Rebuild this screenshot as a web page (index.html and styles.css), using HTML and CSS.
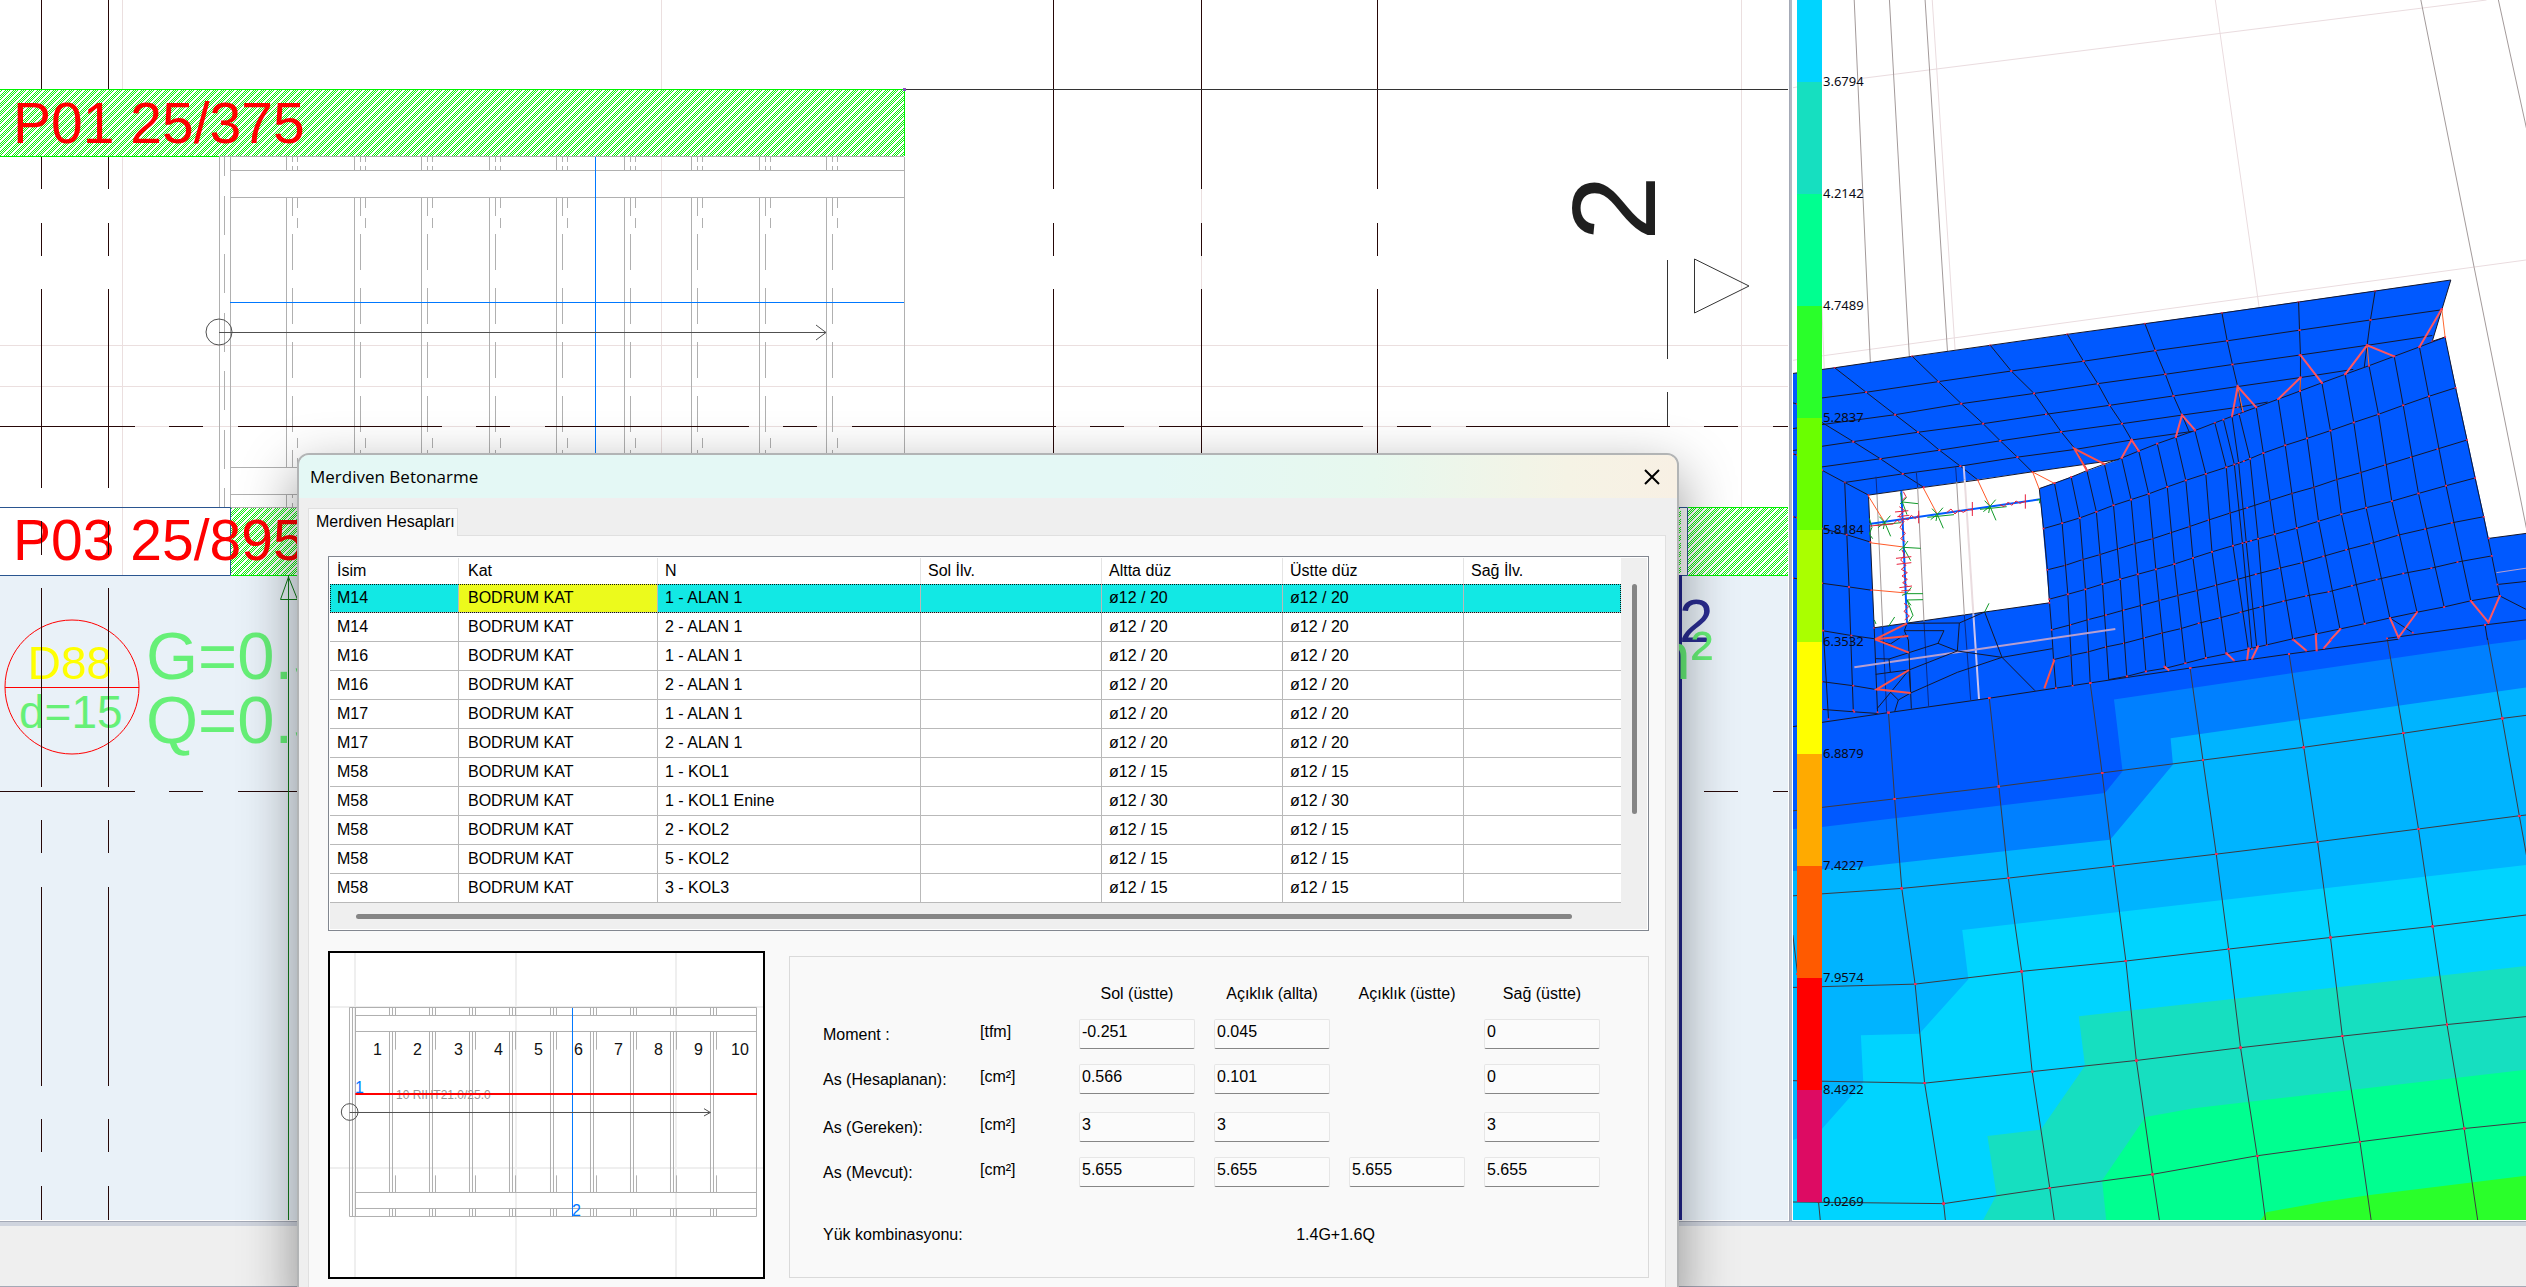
FILE: index.html
```html
<!DOCTYPE html>
<html lang="tr">
<head>
<meta charset="utf-8">
<meta name="viewport" content="width=device-width, initial-scale=1">
<title>Merdiven Betonarme</title>
<link rel="stylesheet" href="styles.css">
</head>
<body>
<main class="workspace">
  <section class="pane pane-plan" aria-label="Kalıp planı">
    <svg class="canvas" aria-hidden="true">
      <defs>
        <pattern id="hatch" width="8" height="8" patternUnits="userSpaceOnUse">
          <path class="hatch-line" d="M-1 1L1 -1M-1 9L9 -1M7 9L9 7M-1 3L3 -1M1 9L9 1M-1 5L5 -1M3 9L9 3"/>
        </pattern>
        <g id="tread">
          <path d="M0 157V170M0 197V467M0 494V507"/>
          <path d="M6 157V162M6 166V170M6 198V216M6 234V270M6 288V324M6 342V378M6 396V432M6 450V467M6 494V498M6 503V507"/>
          <path d="M11 157V162M11 166V170M11 198V208M11 218V228M11 438V448M11 458V467M11 494V498M11 503V507"/>
        </g>
      </defs>
      <rect class="slab" x="0" y="575" width="100%" height="100%"/>
      <g class="grid-line">
        <path d="M122.5 0V507M661.500 0V507M1201.500 0V507M1741.500 0V507"/>
        <path d="M0 345.500H1789M0 386.500H1789M0 426.500H1789"/>
      </g>
      <path class="axis" stroke-dasharray="199 34 33 33" d="M41.500 -10V507M108.500 -10V507M1053.500 -10V507M1201.500 -10V507M1377.500 -10V507"/>
      <g class="stair">
        <path d="M219.500 157V507M230.500 157V507M904.500 157V507M219 156.500H904M230 170.500H904M230 197.500H904M230 467.500H904M230 494.500H904M219 507.500H904"/>
        <path stroke-dasharray="39 20 39 19" d="M224.500 137V507"/>
        <use href="#tread" x="286.500"/><use href="#tread" x="354.500"/><use href="#tread" x="421.500"/>
        <use href="#tread" x="489.500"/><use href="#tread" x="556.500"/><use href="#tread" x="624.500"/>
        <use href="#tread" x="691.500"/><use href="#tread" x="759.500"/><use href="#tread" x="826.500"/>
      </g>
      <rect fill="#fff" x="0" y="90" width="904" height="66"/>
      <rect fill="url(#hatch)" x="0" y="90" width="904" height="66"/>
      <path class="green-edge" d="M0 89.500H904.500V156M0 156.500H219"/>
      <rect fill="#fff" x="0" y="508" width="1788" height="67"/>
      <path class="grid-line" d="M122.500 508V575"/>
      <rect fill="url(#hatch)" x="231" y="508" width="1450" height="67"/>
      <rect fill="url(#hatch)" x="1688" y="508" width="101" height="67"/>
      <path class="green-edge" d="M231 575.500H904M1688 507.500H1789M1688 575.500H1789"/>
      <path class="beam-box" d="M-1 507.500H230.500V575.500H-1M1660 507.500H1687.500V575.500H1660"/>
      <path class="blue" d="M595.500 157V507M230 302.500H904"/>
      <path class="walk" d="M219 332.500H826M816 325L826 332.500L816 340"/>
      <circle class="walk" cx="219" cy="332" r="13"/>
      <text class="beam" x="13" y="143">P01 25/375</text>
      <text class="beam" x="13" y="560">P03 25/895</text>
      <text class="slab-name" x="28" y="679">D88</text>
      <text class="slab-depth" x="19" y="728">d=15</text>
      <text class="load" x="146" y="679">G=0.5</text>
      <text class="load" x="146" y="743">Q=0.5</text>
      <circle class="red" cx="72" cy="687" r="67"/>
      <path class="red" d="M5 687.500H139"/>
      <path class="axis" d="M41.500 521V555M108.500 521V555"/>
      <path class="axis" stroke-dasharray="199 33 33 34" d="M41.500 588V1222M108.500 588V1222"/>
      <path class="axis" stroke-dasharray="204 34 34 35" d="M-69 426.500H1789M-69 791.500H1789"/>
      <path class="edge" d="M905 89.500H1789"/>
      <rect fill="#8a4fc0" x="903" y="88" width="3" height="3"/>
      <path class="edge" d="M1667.500 260V359M1667.500 392V426M1694.500 259V313L1749 286Z"/>
      <text class="axis-name" transform="translate(1655 241) rotate(-90)">2</text>
      <ellipse fill="#555" cx="1087" cy="456" rx="7" ry="2"/>
      <path class="dim" d="M288.500 575V1222M288.500 577L280.500 599.500H297.500Z"/>
      <path class="navy" d="M1680.500 575V1222"/>
      <text class="navy-text" x="1679" y="642">2</text>
      <text class="load" x="1635" y="679">m²</text>
    </svg>
  </section>

  <section class="pane pane-model" aria-label="Analiz sonuçları">
    <svg class="canvas" aria-hidden="true">
      <defs>
        <marker id="node" markerUnits="userSpaceOnUse" markerWidth="6" markerHeight="6" refX="3" refY="3">
          <rect x="1" y="1" width="4" height="4" fill="#f2305a"/>
        </marker>
        <marker id="node2" markerUnits="userSpaceOnUse" markerWidth="6" markerHeight="6" refX="3" refY="3">
          <rect width="6" height="6" fill="#f2305a"/>
        </marker>
        <g id="support">
          <path d="M0 0L18 42M-30 9L50 1M0 0L17 -20M0 0L-16 -17M-20 16L0 0L-4 20"/>
        </g>
      </defs>

      <!-- upper half: axes and wall surfaces -->
      <g transform="translate(-13 0) scale(.47576 .40816)">
        <path stroke="#eadcdf" d="M320 0L368 857M915 0L1007 752M172 192L1485 0M88 872L1568 637M27 215L36 213M88 750L93 905M27 883L36 881"/>
        <path stroke="#a39a9a" d="M156 0L190 890M230 0L272 876M305 0L352 860M1347 0L1459 655L1575 1330M1510 0L1570 320"/>
        <path fill="#0059ff" d="M27 915L1410 686L1371 836L1398 826L1490 1319L1580 1305V1640H27Z"/>
        <path fill="#fff" d="M186 1213L530 1156L712 1126L545 1197L566 1477L198 1538Z"/>
      </g>

      <!-- lower half: stress contours -->
      <g transform="translate(-13 640) scale(.47576 .41262)">
        <path fill="#0059ff" d="M27 0H1600V1410H27Z"/>
        <path fill="#0080ff" d="M27 458L88 453L683 371L720 318L702 144L1480 12L1600 -6V1410H27Z"/>
        <path fill="#00b4ff" d="M27 560L172 550L694 484L826 302L821 238L1600 110V1410H27Z"/>
        <path fill="#00d4ff" d="M27 1212L88 1185L175 1072L170 958L293 954L396 822L383 703L1600 541V1410H27Z"/>
        <path fill="#16dfc0" d="M425 1410L455 1345L436 1202L548 1187L641 1032L628 912L1600 786V1410Z"/>
        <path fill="#00ff90" d="M686 1410L677 1310L768 1156L870 1135L1600 1037V1410Z"/>
        <path fill="#2aff2a" d="M1008 1410L1022 1387L1140 1362L1240 1345L1600 1294V1410Z"/>
      </g>

      <!-- slab mesh -->
      <g transform="translate(-13 640) scale(.47576 .41262)" class="nodes-big" stroke="#3d3a40">
        <path d="M228 176L241 385L256 602L284 834L304 1074L344 1366L348 1410"/>
        <path d="M440 141L460 355L480 577L508 803L530 1046L567 1328L577 1410"/>
        <path d="M652 104L677 322L701 548L727 778L749 1019L783 1295L798 1410"/>
        <path d="M862 68L889 291L917 519L943 749L968 988L1003 1250L1021 1410"/>
        <path d="M1070 34L1101 260L1130 489L1157 721L1182 960L1219 1216L1243 1410"/>
        <path d="M1276 -5L1310 226L1342 458L1372 694L1402 932L1438 1184L1467 1410"/>
        <path d="M1487 -5L1518 190L1554 426L1575 560"/>
        <path d="M27 715L37 810M81 1362L85 1410"/>
        <path d="M27 414L241 385L460 355L677 322L889 291L1101 260L1310 226L1518 190L1600 178"/>
        <path d="M27 620L256 602L480 577L701 548L917 519L1130 489L1342 458L1554 426L1600 420"/>
        <path d="M27 842L284 834L508 803L727 778L943 749L1157 721L1372 694L1600 662"/>
        <path d="M27 1068L304 1074L530 1046L749 1019L968 988L1182 960L1402 932L1600 909"/>
        <path d="M27 1362L344 1366L567 1328L783 1295L1003 1250L1219 1216L1438 1184L1600 1165"/>
        <path stroke="#15182c" d="M27 210L228 176L440 141L652 104L862 68L1070 34L1300 -2"/>
      </g>

      <!-- wall mesh -->
      <g transform="translate(-13 0) scale(.47576 .40816)" class="nodes" stroke="#15182c">
        <path d="M27 915L115 901L278 873L442 846L604 819L767 793L929 767L1090 740L1251 713L1410 686"/>
        <path d="M88 975L181 961L333 935L486 909L638 885L789 859L940 835L1092 809L1241 784L1391 759"/>
        <path d="M27 1050L242 1016L381 989L534 964L668 940L810 917L951 893L1092 870L1234 846L1371 822"/>
        <path d="M27 1104L154 1082L290 1059L427 1038L559 1015L693 993L827 970L962 947L1094 925L1205 905"/>
        <path d="M88 1144L211 1124L335 1103L463 1080L591 1058L719 1038L845 1017L962 998L1025 985"/>
        <path d="M136 1182L258 1161L379 1142L499 1120L621 1101L739 1078L866 1057"/>
        <path d="M186 1213L302 1194L416 1176L530 1156L712 1126"/>
        <path d="M115 901L181 961L242 1016L290 1059L335 1103L379 1142L416 1176"/>
        <path d="M278 873L333 935L381 989L427 1038L463 1080L499 1120L530 1156"/>
        <path d="M442 846L486 909L534 964L591 1058L621 1101L645 1150"/>
        <path d="M604 819L638 885L668 940L693 993L719 1038L739 1078L752 1105"/>
        <path d="M767 793L789 859L810 917L827 970L845 1017L860 1058"/>
        <path d="M929 767L940 835L951 893L962 947L970 1005"/>
        <path d="M1090 740L1092 809L1094 870L1094 925L1094 958"/>
        <path d="M1251 713L1241 784L1234 846L1228 900"/>
        <path d="M1410 686L1391 759L1371 836L1398 826"/>
        <path d="M88 1035L154 1082L211 1124L258 1161L302 1194M88 1152L136 1182L186 1213"/>
        <path d="M27 987L36 990M27 1112L36 1115M27 1266L36 1268M27 1416L36 1418"/>
        <path d="M545 1197L577 1184L612 1169L645 1153L682 1137L718 1122L754 1105L793 1087L832 1071L872 1055L914 1036L950 1020L1001 998L1047 978L1093 958L1139 938L1188 917L1238 896L1291 873L1344 850L1398 826"/>
        <path d="M554 1295L593 1282L630 1269L665 1254L701 1238L738 1224L775 1210L814 1193L853 1177L895 1161L938 1145L975 1130L1016 1110L1062 1091L1108 1074L1157 1055L1206 1035L1258 1015L1310 993L1364 971L1420 950"/>
        <path d="M562 1396L600 1385L636 1371L672 1359L710 1345L745 1332L783 1320L822 1305L861 1290L901 1274L946 1257L982 1244L1030 1226L1076 1209L1122 1194L1170 1175L1220 1158L1272 1139L1326 1120L1382 1100L1444 1078"/>
        <path d="M566 1468L605 1456L642 1444L678 1431L715 1419L752 1407L790 1395L829 1382L868 1367L908 1352L952 1337L990 1325L1040 1309L1086 1294L1132 1277L1180 1260L1232 1244L1286 1228L1342 1209L1400 1190L1461 1171"/>
        <path d="M571 1543L610 1531L648 1518L685 1507L722 1495L760 1483L798 1471L836 1459L876 1447L916 1434L960 1420L1000 1407L1050 1392L1096 1379L1142 1363L1190 1347L1243 1331L1300 1311L1356 1296L1412 1281L1479 1266"/>
        <path d="M575 1616L611 1606L648 1597L685 1585L723 1576L765 1563L803 1551L843 1540L880 1527L924 1514L968 1500L1010 1487L1058 1473L1106 1460L1153 1450L1202 1435L1254 1420L1310 1405L1369 1392L1424 1377L1496 1362"/>
        <path d="M691 1665L729 1657L769 1645L811 1637L852 1625L895 1612L938 1602L985 1590L1023 1580L1078 1565L1128 1553L1177 1541L1229 1528L1282 1514L1339 1500L1396 1487L1452 1472L1513 1460"/>
        <path d="M545 1197L554 1295L562 1396L566 1468L571 1543L575 1616L580 1686M577 1184L593 1282L605 1456L615 1680M612 1169L630 1269L642 1444L652 1673M645 1153L665 1254L678 1431L691 1665"/>
        <path d="M682 1137L701 1238L715 1419L729 1657M718 1122L738 1224L752 1407L769 1645M754 1105L775 1210L790 1395L811 1637M793 1087L814 1193L829 1382L852 1625M832 1071L853 1177L868 1367L895 1612M872 1055L895 1161L908 1352L938 1602"/>
        <path d="M914 1036L938 1145L952 1337L985 1595M932 1028L955 1138L972 1331L992 1590M950 1020L964 1134L980 1328L1002 1585M965 1015L988 1124L1005 1320L1023 1580"/>
        <path d="M1001 998L1016 1110L1040 1309L1078 1568M1047 978L1062 1091L1086 1294L1128 1553M1093 958L1108 1074L1132 1277L1177 1541M1139 938L1157 1055L1180 1260L1229 1528M1188 917L1206 1035L1232 1244L1282 1514"/>
        <path d="M1238 896L1258 1015L1286 1228L1339 1500M1291 873L1310 993L1342 1209L1396 1487M1344 850L1364 971L1400 1190L1452 1472M1398 826L1420 950L1444 1078L1461 1171L1479 1266L1496 1362L1513 1460"/>
        <path d="M136 1182L145 1438L154 1740M88 1152L91 1545L102 1762M186 1213L198 1538L205 1745M88 1295L140 1310L190 1328M88 1429L145 1438L192 1446M88 1545L150 1557L205 1566M88 1670L154 1680L205 1690M88 1738L156 1744L205 1748"/>
        <path d="M198 1538L566 1477M1490 1319L1580 1305M1508 1432L1580 1423M1513 1460L1580 1500M1276 1564L1482 1531L1580 1517M1282 1514L1330 1550M1482 1531L1487 1568"/>
        <path stroke="#b79fd0" d="M1506 1403L1580 1390"/>
        <path stroke="#ff5560" stroke-width="2" d="M718 1122L739 1078L754 1105M832 1071L845 1017L872 1053M950 1020L962 947L1001 998M1094 870L1139 938M1047 978L1094 925M1188 917L1234 846L1291 873M1344 850L1391 757M1452 1472L1489 1525L1513 1460M1282 1514L1300 1562L1339 1500M1126 1553L1128 1594M1178 1541L1155 1570"/>
        <path stroke="#ff6a30" d="M962 947L973 1008M1094 925L1093 958M1234 846L1238 896M1391 757L1398 826"/>
        <path stroke="#ff5560" stroke-width="2" d="M1080 1568L1106 1594M1158 1568L1143 1588M1005 1583L992 1614M985 1588L982 1616M938 1600L954 1618M808 1633L818 1643"/>
      </g>

      <!-- opening, beams and supports -->
      <g transform="translate(47 440) scale(.33333)">
        <path stroke="#a39a9a" d="M111 163L128 560M233 143L252 545M350 125L373 525"/>
        <path stroke="#0b2a86" d="M108 110L111 163M229 97L233 143M347 82L350 125M128 560L140 815M252 545L266 800M373 525L392 780"/>
        <path stroke="#eadcdf" stroke-width="2" d="M374 118L400 520"/>
        <path stroke="#c9c3f0" stroke-width="2" d="M371 78L374 118M400 520L417 777"/>
        <path stroke="#b79fd0" stroke-width="2" d="M43 682L826 567"/>
        <path stroke="#15182c" d="M201 550L193 572L205 600L207 638L147 657L107 656M193 572L312 572L294 610L352 633L358 549L201 550M207 638L294 610M352 633L486 652L637 626M434 516L486 652L585 752M212 759L352 697L486 652M358 549L434 516M207 690L151 697L107 703M207 690L352 633M152 757L207 690L212 759L175 780L164 815M112 805L152 757L175 780M105 598L151 612L193 585M207 638L214 806M147 657L151 697"/>
        <path stroke="#ff5a28" d="M85 168L134 247M250 144L292 223M412 118L450 199M598 148L578 96L643 130M88 308L190 321M98 450L199 459"/>
        <path stroke="#0059ff" stroke-width="2" d="M88 252L600 178M184 152L201 550"/>
        <g stroke="#109a28">
          <use href="#support" x="134" y="247"/><use href="#support" x="292" y="223"/><use href="#support" x="450" y="199"/>
          <path d="M187 186L234 191M187 186L201 224M187 186L200 172M180 192L187 186L182 158M190 322L242 325M190 322L212 362M190 322L204 303M178 332L190 322M199 461L249 461M201 480L249 479M201 480L219 526L206 545M199 461L214 442M186 466L199 461M201 480L213 496M88 235L96 262L88 282L98 296M600 178L590 180M600 178L598 190M434 516L447 490M145 560L164 531M103 540L108 552"/>
        </g>
        <g stroke="#e8203c">
          <path d="M90 258L160 252L172 240L180 248L192 235L204 240L214 226L226 236L236 224M320 218L333 207L345 222L357 210L370 217L384 208L398 210M480 194L492 200L505 186L515 196L528 183L540 190L555 184M236 212V250M397 186V228M556 163V206"/>
          <path d="M165 216L205 212M172 230L208 226M190 155L198 170L186 182M178 200L194 212L176 228L192 244L180 262L196 280L182 296L196 305M168 355L214 350M170 373L214 368M186 330L194 345L182 360L198 376L184 388L202 398L186 408L202 418L188 428L202 436M178 443L216 438M184 453L212 450M192 490L206 500L192 514L208 528L194 540"/>
        </g>
        <path stroke="#ff5048" stroke-width="2" d="M201 550L105 598L205 588M105 598L207 638M207 690L110 748L212 759M643 660L613 745M795 73L703 26L740 90"/>
      </g>

      <!-- colour scale -->
      <g>
        <rect fill="#00d4ff" x="4" y="-30" width="25" height="112"/>
        <rect fill="#16dfc0" x="4" y="82" width="25" height="112"/>
        <rect fill="#00ff90" x="4" y="194" width="25" height="112"/>
        <rect fill="#2aff2a" x="4" y="306" width="25" height="112"/>
        <rect fill="#6aff00" x="4" y="418" width="25" height="112"/>
        <rect fill="#aaff00" x="4" y="530" width="25" height="112"/>
        <rect fill="#ffff00" x="4" y="642" width="25" height="112"/>
        <rect fill="#ffaa00" x="4" y="754" width="25" height="112"/>
        <rect fill="#ff5a00" x="4" y="866" width="25" height="112"/>
        <rect fill="#ff0000" x="4" y="978" width="25" height="112"/>
        <rect fill="#dd0b63" x="4" y="1090" width="25" height="112"/>
      </g>
      <g class="scale-text">
        <text x="30" y="86">3.6794</text><text x="30" y="198">4.2142</text><text x="30" y="310">4.7489</text>
        <text x="30" y="422">5.2837</text><text x="30" y="534">5.8184</text><text x="30" y="646">6.3532</text>
        <text x="30" y="758">6.8879</text><text x="30" y="870">7.4227</text><text x="30" y="982">7.9574</text>
        <text x="30" y="1094">8.4922</text><text x="30" y="1206">9.0269</text>
      </g>
    </svg>
  </section>
</main>
<footer class="status"></footer>

<div class="dialog" role="dialog" aria-labelledby="dialog-title">
  <header class="titlebar">
    <h1 class="title" id="dialog-title">Merdiven Betonarme</h1>
    <button class="close" type="button" aria-label="Kapat">
      <svg width="16" height="16" viewBox="0 0 16 16" aria-hidden="true"><path d="M1 1L15 15M15 1L1 15"/></svg>
    </button>
  </header>
  <div class="tabs" role="tablist">
    <button class="tab" type="button" role="tab" aria-selected="true">Merdiven Hesapları</button>
  </div>
  <div class="page" role="tabpanel">
    <div class="list">
      <table class="results">
        <colgroup><col class="c-name"><col class="c-floor"><col class="c-n"><col class="c-bar"><col class="c-bar"><col class="c-bar"><col class="c-last"></colgroup>
        <thead><tr><th scope="col">İsim</th><th scope="col">Kat</th><th scope="col">N</th><th scope="col">Sol İlv.</th><th scope="col">Altta düz</th><th scope="col">Üstte düz</th><th scope="col">Sağ İlv.</th></tr></thead>
        <tbody>
          <tr class="selected"><td>M14</td><td class="current">BODRUM KAT</td><td>1 - ALAN 1</td><td></td><td>ø12 / 20</td><td>ø12 / 20</td><td></td></tr>
          <tr><td>M14</td><td>BODRUM KAT</td><td>2 - ALAN 1</td><td></td><td>ø12 / 20</td><td>ø12 / 20</td><td></td></tr>
          <tr><td>M16</td><td>BODRUM KAT</td><td>1 - ALAN 1</td><td></td><td>ø12 / 20</td><td>ø12 / 20</td><td></td></tr>
          <tr><td>M16</td><td>BODRUM KAT</td><td>2 - ALAN 1</td><td></td><td>ø12 / 20</td><td>ø12 / 20</td><td></td></tr>
          <tr><td>M17</td><td>BODRUM KAT</td><td>1 - ALAN 1</td><td></td><td>ø12 / 20</td><td>ø12 / 20</td><td></td></tr>
          <tr><td>M17</td><td>BODRUM KAT</td><td>2 - ALAN 1</td><td></td><td>ø12 / 20</td><td>ø12 / 20</td><td></td></tr>
          <tr><td>M58</td><td>BODRUM KAT</td><td>1 - KOL1</td><td></td><td>ø12 / 15</td><td>ø12 / 15</td><td></td></tr>
          <tr><td>M58</td><td>BODRUM KAT</td><td>1 - KOL1 Enine</td><td></td><td>ø12 / 30</td><td>ø12 / 30</td><td></td></tr>
          <tr><td>M58</td><td>BODRUM KAT</td><td>2 - KOL2</td><td></td><td>ø12 / 15</td><td>ø12 / 15</td><td></td></tr>
          <tr><td>M58</td><td>BODRUM KAT</td><td>5 - KOL2</td><td></td><td>ø12 / 15</td><td>ø12 / 15</td><td></td></tr>
          <tr><td>M58</td><td>BODRUM KAT</td><td>3 - KOL3</td><td></td><td>ø12 / 15</td><td>ø12 / 15</td><td></td></tr>
        </tbody>
      </table>
      <div class="vbar"><div class="vthumb"></div></div>
      <div class="hbar"><div class="hthumb"></div></div>
    </div>

    <div class="details">
      <div class="preview">
        <svg class="canvas" aria-hidden="true">
          <defs>
            <g id="step"><path d="M0 234V256M9 234V256M18 234V256M0 304V787M9 304V787M18 304V359M18 736V787M0 835V859M9 835V859M18 835V859"/></g>
          </defs>
          <g transform="translate(-30 -23) scale(.33333)">
            <path stroke="#efefef" stroke-width="2" d="M165 60V1045M648 60V1045M1128 60V1045M80 231H1400M80 714H1400"/>
            <g stroke="#b0b0b0">
              <path d="M148.500 232.500V859.500H1369.500V232.500ZM157.500 232V859M166.500 232V859M166 256.500H1369M166 304.500H1369M166 787.500H1369M166 835.500H1369"/>
              <use href="#step" x="268.500"/><use href="#step" x="388.500"/><use href="#step" x="508.500"/>
              <use href="#step" x="628.500"/><use href="#step" x="751.500"/><use href="#step" x="871.500"/>
              <use href="#step" x="991.500"/><use href="#step" x="1111.500"/><use href="#step" x="1231.500"/>
            </g>
          </g>
          <text class="rise" x="66" y="146">10 RIHT21.0/25.0</text>
          <g transform="translate(-30 -23) scale(.33333)">
            <path stroke="#0078ff" d="M817.500 234V859"/>
            <path stroke="#505050" d="M149 547.500H1231M1212 536L1231 547.500L1212 558"/>
            <circle stroke="#505050" cx="149" cy="546" r="25"/>
            <path stroke="#ff0000" stroke-width="2" d="M166 492H1371"/>
          </g>
          <g class="step-no">
            <text x="43" y="102">1</text><text x="83" y="102">2</text><text x="124" y="102">3</text><text x="164" y="102">4</text><text x="204" y="102">5</text>
            <text x="244" y="102">6</text><text x="284" y="102">7</text><text x="324" y="102">8</text><text x="364" y="102">9</text><text x="401" y="102">10</text>
          </g>
          <text class="section-no" x="25" y="140">1</text>
          <text class="section-no" x="242" y="263">2</text>
        </svg>
      </div>

      <form class="values">
        <span class="head first" id="h1">Sol (üstte)</span><span class="head" id="h2">Açıklık (allta)</span><span class="head" id="h3">Açıklık (üstte)</span><span class="head" id="h4">Sağ (üstte)</span>

        <span class="label" id="r1">Moment :</span><span class="unit">[tfm]</span>
        <input class="field" aria-labelledby="r1 h1" value="-0.251"><input class="field" aria-labelledby="r1 h2" value="0.045"><input class="field last" aria-labelledby="r1 h4" value="0">

        <span class="label" id="r2">As (Hesaplanan):</span><span class="unit">[cm²]</span>
        <input class="field" aria-labelledby="r2 h1" value="0.566"><input class="field" aria-labelledby="r2 h2" value="0.101"><input class="field last" aria-labelledby="r2 h4" value="0">

        <span class="label" id="r3">As (Gereken):</span><span class="unit">[cm²]</span>
        <input class="field" aria-labelledby="r3 h1" value="3"><input class="field" aria-labelledby="r3 h2" value="3"><input class="field last" aria-labelledby="r3 h4" value="3">

        <span class="label" id="r4">As (Mevcut):</span><span class="unit">[cm²]</span>
        <input class="field" aria-labelledby="r4 h1" value="5.655"><input class="field" aria-labelledby="r4 h2" value="5.655"><input class="field" aria-labelledby="r4 h3" value="5.655"><input class="field" aria-labelledby="r4 h4" value="5.655">

        <span class="combo">Yük kombinasyonu:</span><output class="combo combo-value">1.4G+1.6Q</output>
      </form>
    </div>
  </div>
</div>
</body>
</html>
```

FILE: styles.css
```css
* { box-sizing: border-box; }

body {
  margin: 0;
  height: 100vh;
  display: flex;
  flex-direction: column;
  position: relative;
  overflow: hidden;
  background: #efefef;
  color: #000;
  font: 16px/20px "Liberation Sans", Arial, sans-serif;
}

/* ---------- drawing panes ---------- */
.workspace {
  flex: 1;
  min-height: 0;
  display: grid;
  grid-template-columns: 1790fr 736fr;
  padding-bottom: 4px;
  background: #cfd4de;
}

.pane {
  min-width: 0;
  overflow: hidden;
  background: #fff;
  border-bottom: 1px solid #a4a9b6;
  padding-bottom: 1px;
}

.pane-plan { border-right: 1px solid #a4a9b6; padding-right: 1px; }
.pane-model { border-left: 2px solid #b4b8c4; padding-left: 1px; }

.canvas {
  display: block;
  width: 100%;
  height: 100%;
  fill: none;
}

.canvas text { font-family: "Liberation Sans", Arial, sans-serif; }
.canvas path, .canvas circle { vector-effect: non-scaling-stroke; }

.status {
  height: 61px;
  background: #efefef;
  border-bottom: 1px solid #a4a9b6;
}

.slab { fill: #e9f1f8; }
.hatch-line { stroke: #10f010; stroke-width: 1; shape-rendering: crispEdges; }
.grid-line { stroke: #ebdfdf; }
.stair { stroke: #b0b0b0; }
.green-edge { stroke: #00f000; }
.beam-box { stroke: #2a5590; }
.blue { stroke: #0078ff; }
.walk { stroke: #505050; }
.red { stroke: #ff0000; }
.axis { stroke: #260808; }
.edge { stroke: #333; }
.dim { stroke: #107a18; }
.navy { stroke: #22258a; stroke-width: 3; }

.beam { fill: #ff0000; font-size: 57px; }
.slab-name { fill: #ffff00; font-size: 46px; }
.slab-depth { fill: #66f077; font-size: 46px; }
.load { fill: #66f077; font-size: 67px; }
.axis-name { fill: #1f1f1f; font-size: 118px; }
.navy-text { fill: #2a2c90; font-size: 62px; }

.nodes > path { marker-mid: url(#node); }
.nodes-big > path { marker-mid: url(#node2); }
.scale-text { fill: #0a0a14; }
.scale-text text { font-family: "Noto Sans", sans-serif; font-size: 13px; }

/* ---------- dialog window ---------- */
.dialog {
  position: absolute;
  left: 297px;
  right: 847px;
  top: 453px;
  bottom: -24px;
  border: 2px solid #b2b4b5;
  border-radius: 12px;
  background: #efefef;
  box-shadow: 0 20px 56px rgba(0, 0, 0, .42);
  overflow: hidden;
}

.titlebar {
  height: 43px;
  display: flex;
  align-items: center;
  justify-content: space-between;
  padding: 0 17px 0 11px;
  background: linear-gradient(90deg, #e4f8f5 0%, #e4f8f5 62%, #e7f8ee 78%, #f5f3e5 92%, #f8f0e4 100%);
}

.title {
  margin: 0;
  font: 17px/24px "Open Sans", "Noto Sans", sans-serif;
}

.close {
  display: flex;
  padding: 0;
  border: 0;
  background: none;
}

.close svg { stroke: #000; stroke-width: 2; fill: none; }

.tabs { padding: 10px 10px 0 9px; display: flex; }

.tab {
  position: relative;
  z-index: 1;
  margin-bottom: -1px;
  height: 28px;
  width: 150px;
  padding: 0 0 1px 7px;
  text-align: left;
  white-space: nowrap;
  overflow: hidden;
  border: 1px solid #e0e0e0;
  border-bottom: 0;
  background: #f9f9f9;
  color: #000;
  font: inherit;
}

.page {
  height: 100%;
  margin: 0 11px 0 9px;
  padding: 20px 16px 0 19px;
  border: 1px solid #e0e0e0;
  background: #f9f9f9;
}

.list {
  display: grid;
  grid-template-columns: 1fr 26px;
  grid-template-rows: auto 26px;
  padding: 1px;
  border: 1px solid #828790;
  background: #fff;
}

.results {
  width: 100%;
  table-layout: fixed;
  border-collapse: separate;
  border-spacing: 0;
}

.c-name { width: 129px; }
.c-floor { width: 199px; }
.c-n { width: 263px; }
.c-bar { width: 181px; }
.c-last { width: auto; }

.results th {
  height: 26px;
  padding: 0 7px;
  border-right: 1px solid #e4e4e4;
  text-align: left;
  font-weight: normal;
}

.results td {
  height: 29px;
  padding: 0 7px;
  border-right: 1px solid #b9b9b9;
  border-bottom: 1px solid #b9b9b9;
  white-space: nowrap;
}

.results th:nth-child(2), .results td:nth-child(2) { padding-left: 9px; }
.results th:last-child, .results td:last-child { border-right: 0; }
.selected { background: #12e8e4; outline: 1px dotted #111; outline-offset: -1px; }
.selected .current { background: #ecfa1c; }

.vbar, .hbar { background: #efefef; }
.vbar { padding: 26px 10px 0 11px; }
.vthumb { height: 72%; border-radius: 3px; background: #858585; }
.hbar { grid-column: 1 / -1; padding: 11px 75px 0 26px; }
.hthumb { height: 5px; border-radius: 3px; background: #858585; }

.details {
  display: grid;
  grid-template-columns: 437px 1fr;
  column-gap: 24px;
  padding-top: 20px;
}

.preview {
  height: 328px;
  border: 2px solid #000;
  background: #fff;
}

.step-no { fill: #111; }
.step-no text, .section-no { font-size: 16px; }
.section-no { fill: #0078ff; }
.rise { fill: #969696; font-size: 12px; }

.values {
  display: grid;
  grid-template-columns: 138px 80px repeat(4, 116px);
  grid-template-rows: 45px 45px 48px 45px 48px 40px;
  column-gap: 19px;
  align-items: start;
  height: 322px;
  margin-top: 5px;
  padding: 17px 20px 0 33px;
  border: 1px solid #dadada;
}

.head { padding-top: 10px; text-align: center; white-space: nowrap; }
.first { grid-column: 3; }
.label { padding-top: 6px; white-space: nowrap; }
.unit { padding-top: 3px; }

.field {
  width: 100%;
  height: 30px;
  padding: 0 2px 4px;
  border: 1px solid #e6e6e6;
  border-bottom-color: #868686;
  border-radius: 2px;
  outline: 0;
  background: #fbfbfb;
  color: #000;
  font: inherit;
}

.last { grid-column: 6; }
.combo { padding-top: 20px; white-space: nowrap; }
.combo-value { grid-column: 4 / 6; padding-right: 8px; text-align: center; }
```
